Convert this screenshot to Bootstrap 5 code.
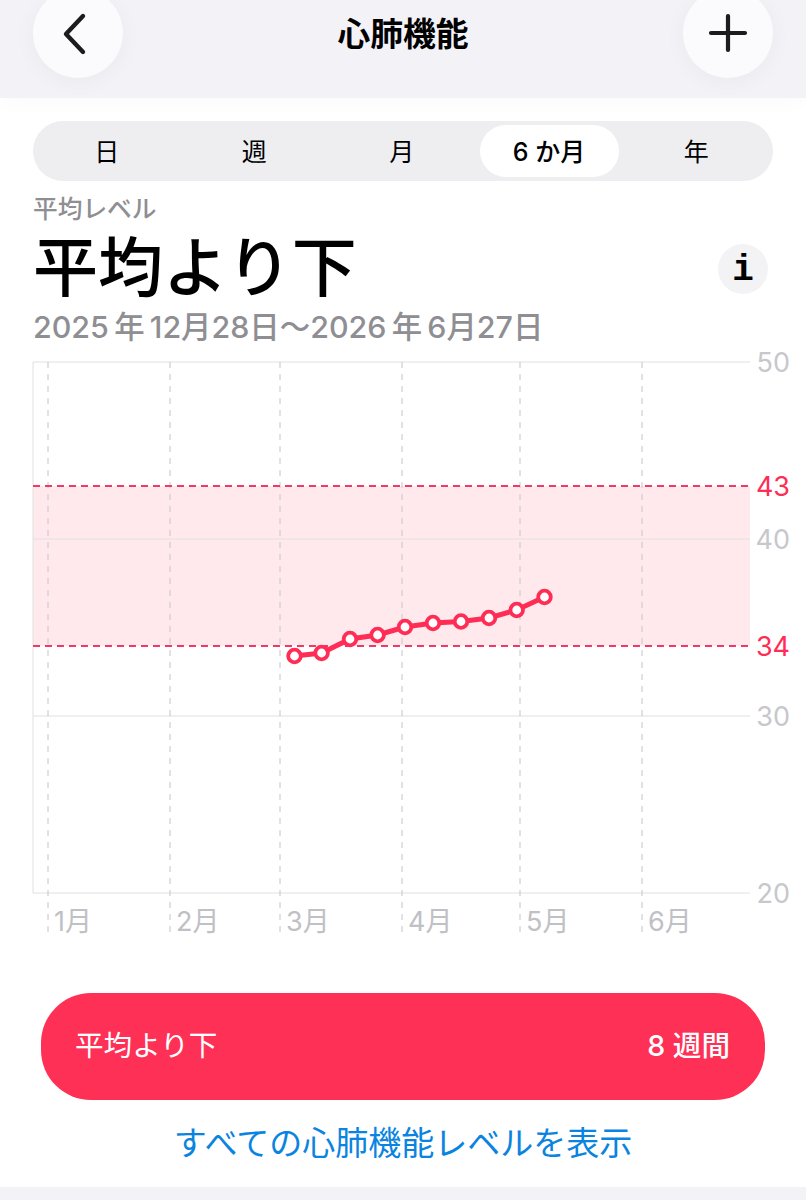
<!doctype html>
<html lang="ja">
<head>
  <meta charset="utf-8">
  <title>心肺機能</title>
  <meta name="viewport" content="width=device-width,initial-scale=1">
  <link href="https://cdn.jsdelivr.net/npm/bootstrap@5.3.3/dist/css/bootstrap.min.css" rel="stylesheet">
  <style>
    html, body { height:1200px; overflow:hidden; }
    body { background:#fff; font-family:Inter,"Noto Sans CJK JP",sans-serif; color:#000; }
    .top-head { height:98px; background:#f2f2f7; padding:0 33px; box-shadow:0 6px 18px rgba(0,0,0,.018); }
    .round-btn { width:90px; height:90px; margin-top:-12px; background:#fbfbfd; border-radius:50%; box-shadow:0 4px 22px rgba(0,0,0,.04); }
    .back-mark { margin-right:8px; margin-top:2px; }
    .head-title { font-size:32.8px; font-weight:700; line-height:1; margin-top:-30px; }
    .seg-wrap { height:60px; margin:23px 33px 0; padding:4px 0; background:#eeeef0; border-radius:30px; }
    .seg-item { width:147.5px; height:52px; padding-top:3px; font-size:25px; border-radius:26px; }
    .seg-item.on { width:139px; margin:0 4px; background:#fff; font-weight:500; }
    .sub-label { margin:14px 33px 0; font-size:24.7px; line-height:28px; font-weight:500; color:#8e8e93; }
    .level-row { margin:13px 38px 0 33px; height:64px; }
    .level-title { font-size:65px; line-height:64px; font-weight:500; }
    .info-dot { width:50px; height:50px; margin-top:2px; padding-top:3px; border-radius:50%; background:#f3f3f6; font-family:"Liberation Mono",monospace; font-weight:700; font-size:36px; }
    .date-line { margin:10px 33px 0; font-size:30.4px; line-height:34px; font-weight:500; color:#8e8e93; white-space:nowrap; }
    .chart-box { display:block; margin-top:1px; }
    .chart-box text { font-family:Inter,"Noto Sans CJK JP",sans-serif; }
    .status-pill { height:107px; margin:48px 41px 0; padding:0 35px 0 34px; background:#ff3055; color:#fff; border-radius:50px; font-size:28.6px; }
    .status-pill b { font-weight:500; }
    .all-link { display:block; margin-top:24px; font-size:33px; line-height:38px; color:#0a84e0; text-decoration:none; white-space:nowrap; }
    .foot-strip { height:13px; margin-top:25px; background:#f2f2f7; }
  </style>
</head>
<body>

<div class="top-head d-flex justify-content-between align-items-start">
  <div class="round-btn d-flex align-items-center justify-content-center">
    <svg class="back-mark" width="30" height="44" viewBox="0 0 30 44"><path d="M24 4 7 22 24 40" fill="none" stroke="#1c1c1e" stroke-width="4.4" stroke-linecap="round" stroke-linejoin="round"/></svg>
  </div>
  <div class="head-title align-self-center">心肺機能</div>
  <div class="round-btn d-flex align-items-center justify-content-center">
    <svg width="40" height="40" viewBox="0 0 40 40"><path d="M20 3V37M3 20H37" fill="none" stroke="#1c1c1e" stroke-width="4.2" stroke-linecap="round"/></svg>
  </div>
</div>

<div class="seg-wrap d-flex">
  <div class="seg-item d-flex align-items-center justify-content-center">日</div>
  <div class="seg-item d-flex align-items-center justify-content-center">週</div>
  <div class="seg-item d-flex align-items-center justify-content-center">月</div>
  <div class="seg-item on d-flex align-items-center justify-content-center">6 か月</div>
  <div class="seg-item d-flex align-items-center justify-content-center">年</div>
</div>

<div class="sub-label">平均レベル</div>
<div class="level-row d-flex justify-content-between align-items-center">
  <div class="level-title">平均より下</div>
  <div class="info-dot d-flex align-items-center justify-content-center">i</div>
</div>
<div class="date-line">2025&#8201;年&#8201;12月28日～2026&#8201;年&#8201;6月27日</div>

<svg id="chart" class="chart-box" width="806" height="600" viewBox="0 345 806 600"></svg>

<div class="status-pill d-flex justify-content-between align-items-center">
  <span>平均より下</span>
  <b>8 週間</b>
</div>
<div class="text-center"><a class="all-link" href="#">すべての心肺機能レベルを表示</a></div>
<div class="foot-strip"></div>

<script src="https://cdn.jsdelivr.net/npm/bootstrap@5.3.3/dist/js/bootstrap.bundle.min.js"></script>
<script>
const PINK = "#ff2d55";
const months = [[48,"1月"],[170,"2月"],[280,"3月"],[402,"4月"],[520,"5月"],[642,"6月"]];
const scale  = [[362,"50"],[539,"40"],[716,"30"],[893,"20"]];
const points = [[294.5,656],[321.6,653],[350,639],[377.6,635],[405,627],[433,623],[461,621.5],[489,618],[516.7,610],[544.5,597]];

let s = "";
s += `<rect x="33" y="486" width="717" height="160" fill="#ffe9ec"/>`;
s += `<path d="M33 362V893" stroke="#e0e0e3" stroke-width="1"/>`;
scale.forEach(([y,t]) => {
  s += `<path d="M33 ${y}H750" stroke="#e0e0e3" stroke-width="1"/>`;
  s += `<text x="790" y="${y+10}" text-anchor="end" font-size="27" fill="#c7c7cc">${t}</text>`;
});
months.forEach(([x,t]) => {
  s += `<path d="M${x} 362V936" stroke="#c4c4c9" stroke-width="1" stroke-dasharray="6 6"/>`;
  s += `<text x="${x+6}" y="931" font-size="27" fill="#c0c0c5">${t}</text>`;
});
[[486,"43"],[646,"34"]].forEach(([y,t]) => {
  s += `<path d="M33 ${y}H750" stroke="#ee3a64" stroke-width="2" stroke-dasharray="7 5"/>`;
  s += `<text x="790" y="${y+10}" text-anchor="end" font-size="27" fill="${PINK}">${t}</text>`;
});
s += `<polyline points="${points.map(p => p.join(",")).join(" ")}" fill="none" stroke="${PINK}" stroke-width="5"/>`;
points.forEach(([x,y]) => {
  s += `<circle cx="${x}" cy="${y}" r="6.3" fill="#fff" stroke="${PINK}" stroke-width="3.8"/>`;
});
document.getElementById("chart").innerHTML = s;
</script>
</body>
</html>
